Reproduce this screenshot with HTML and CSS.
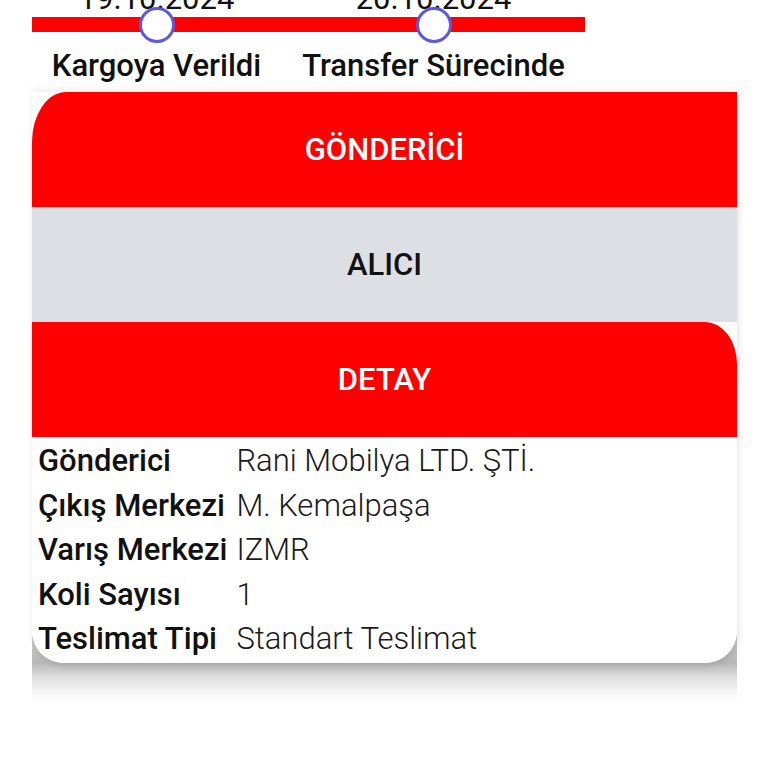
FILE: index.html
```html
<!DOCTYPE html>
<html lang="tr">
<head>
<meta charset="utf-8">
<link rel="stylesheet" href="styles.css">
</head>
<body>
<div class="timeline">
  <div class="steps dates">
    <span>19.10.2024</span>
    <span>20.10.2024</span>
  </div>
  <div class="steps track">
    <span class="dot"></span>
    <span class="dot"></span>
  </div>
  <div class="steps labels">
    <span>Kargoya Verildi</span>
    <span>Transfer Sürecinde</span>
  </div>
</div>

<div class="card">
  <div class="tab tab-sender">GÖNDERİCİ</div>
  <div class="tab tab-receiver">ALICI</div>
  <div class="tab tab-detail">DETAY</div>
  <div class="details">
    <div class="label">Gönderici</div><div class="value">Rani Mobilya LTD. ŞTİ.</div>
    <div class="label">Çıkış Merkezi</div><div class="value">M. Kemalpaşa</div>
    <div class="label">Varış Merkezi</div><div class="value">IZMR</div>
    <div class="label">Koli Sayısı</div><div class="value">1</div>
    <div class="label">Teslimat Tipi</div><div class="value">Standart Teslimat</div>
  </div>
</div>
</body>
</html>
```

FILE: styles.css
```css
html {
  margin: 0;
  padding: 0;
  background: #ffffff;
}

body {
  margin: 0;
  padding: 0;
  font-family: Roboto, "Noto Sans", sans-serif;
  color: #111111;
  width: 768px;
  height: 768px;
  overflow: hidden;
}

.timeline {
  padding-left: 18px;
}

.steps {
  display: grid;
  grid-template-columns: 277px 277px;
  justify-items: center;
}

.dates {
  font-size: 31px;
  line-height: 32px;
  height: 0;
  margin-top: -17px;
  color: #111111;
}

.dates span {
  display: block;
  height: 32px;
}

.track {
  position: relative;
  height: 36px;
  margin-top: 24px;
  align-items: center;
}

.track::before {
  content: "";
  position: absolute;
  left: 14px;
  width: 553px;
  top: 10px;
  height: 15px;
  background: #ff0000;
}

.dot {
  position: relative;
  box-sizing: border-box;
  width: 36px;
  height: 36px;
  border-radius: 50%;
  background: #ffffff;
  border: 3px solid #5a5ae0;
}

.labels {
  font-size: 31px;
  line-height: 34px;
  font-weight: 500;
  margin-top: 6px;
}

.card {
  position: relative;
  margin: 9px 31px 0 32px;
  background: #ffffff;
  border-radius: 0 0 32px 32px;
  box-shadow: 0 -4px 10px rgba(0, 0, 0, 0.05), 2px 4px 6px rgba(0, 0, 0, 0.08);
}

.card::after {
  content: "";
  position: absolute;
  left: 0;
  right: 0;
  bottom: -42px;
  height: 72px;
  z-index: -1;
  background: linear-gradient(to bottom,
    rgba(0, 0, 0, 0.2) 0,
    rgba(0, 0, 0, 0.28) 30px,
    rgba(0, 0, 0, 0.13) 44px,
    rgba(0, 0, 0, 0.03) 60px,
    rgba(0, 0, 0, 0) 72px);
}

.tab {
  height: 115px;
  display: flex;
  align-items: center;
  justify-content: center;
  font-size: 31px;
  font-weight: 500;
}

.tab-sender {
  background: #ff0000;
  color: #ffffff;
  border-top-left-radius: 34px 50px;
}

.tab-receiver {
  background: #dcdfe3;
  color: #111111;
}

.tab-detail {
  background: #ff0000;
  color: #ffffff;
  border-top-right-radius: 32px 42px;
}

.details {
  display: grid;
  grid-template-columns: auto 1fr;
  column-gap: 9px;
  padding: 2px 6px 1px 6px;
  font-size: 31px;
  line-height: 44.5px;
  background: #ffffff;
  border-radius: 0 0 32px 32px;
}

.label {
  font-weight: 500;
  color: #111111;
}

.value {
  font-weight: 300;
  color: #1a1a1a;
}
```
